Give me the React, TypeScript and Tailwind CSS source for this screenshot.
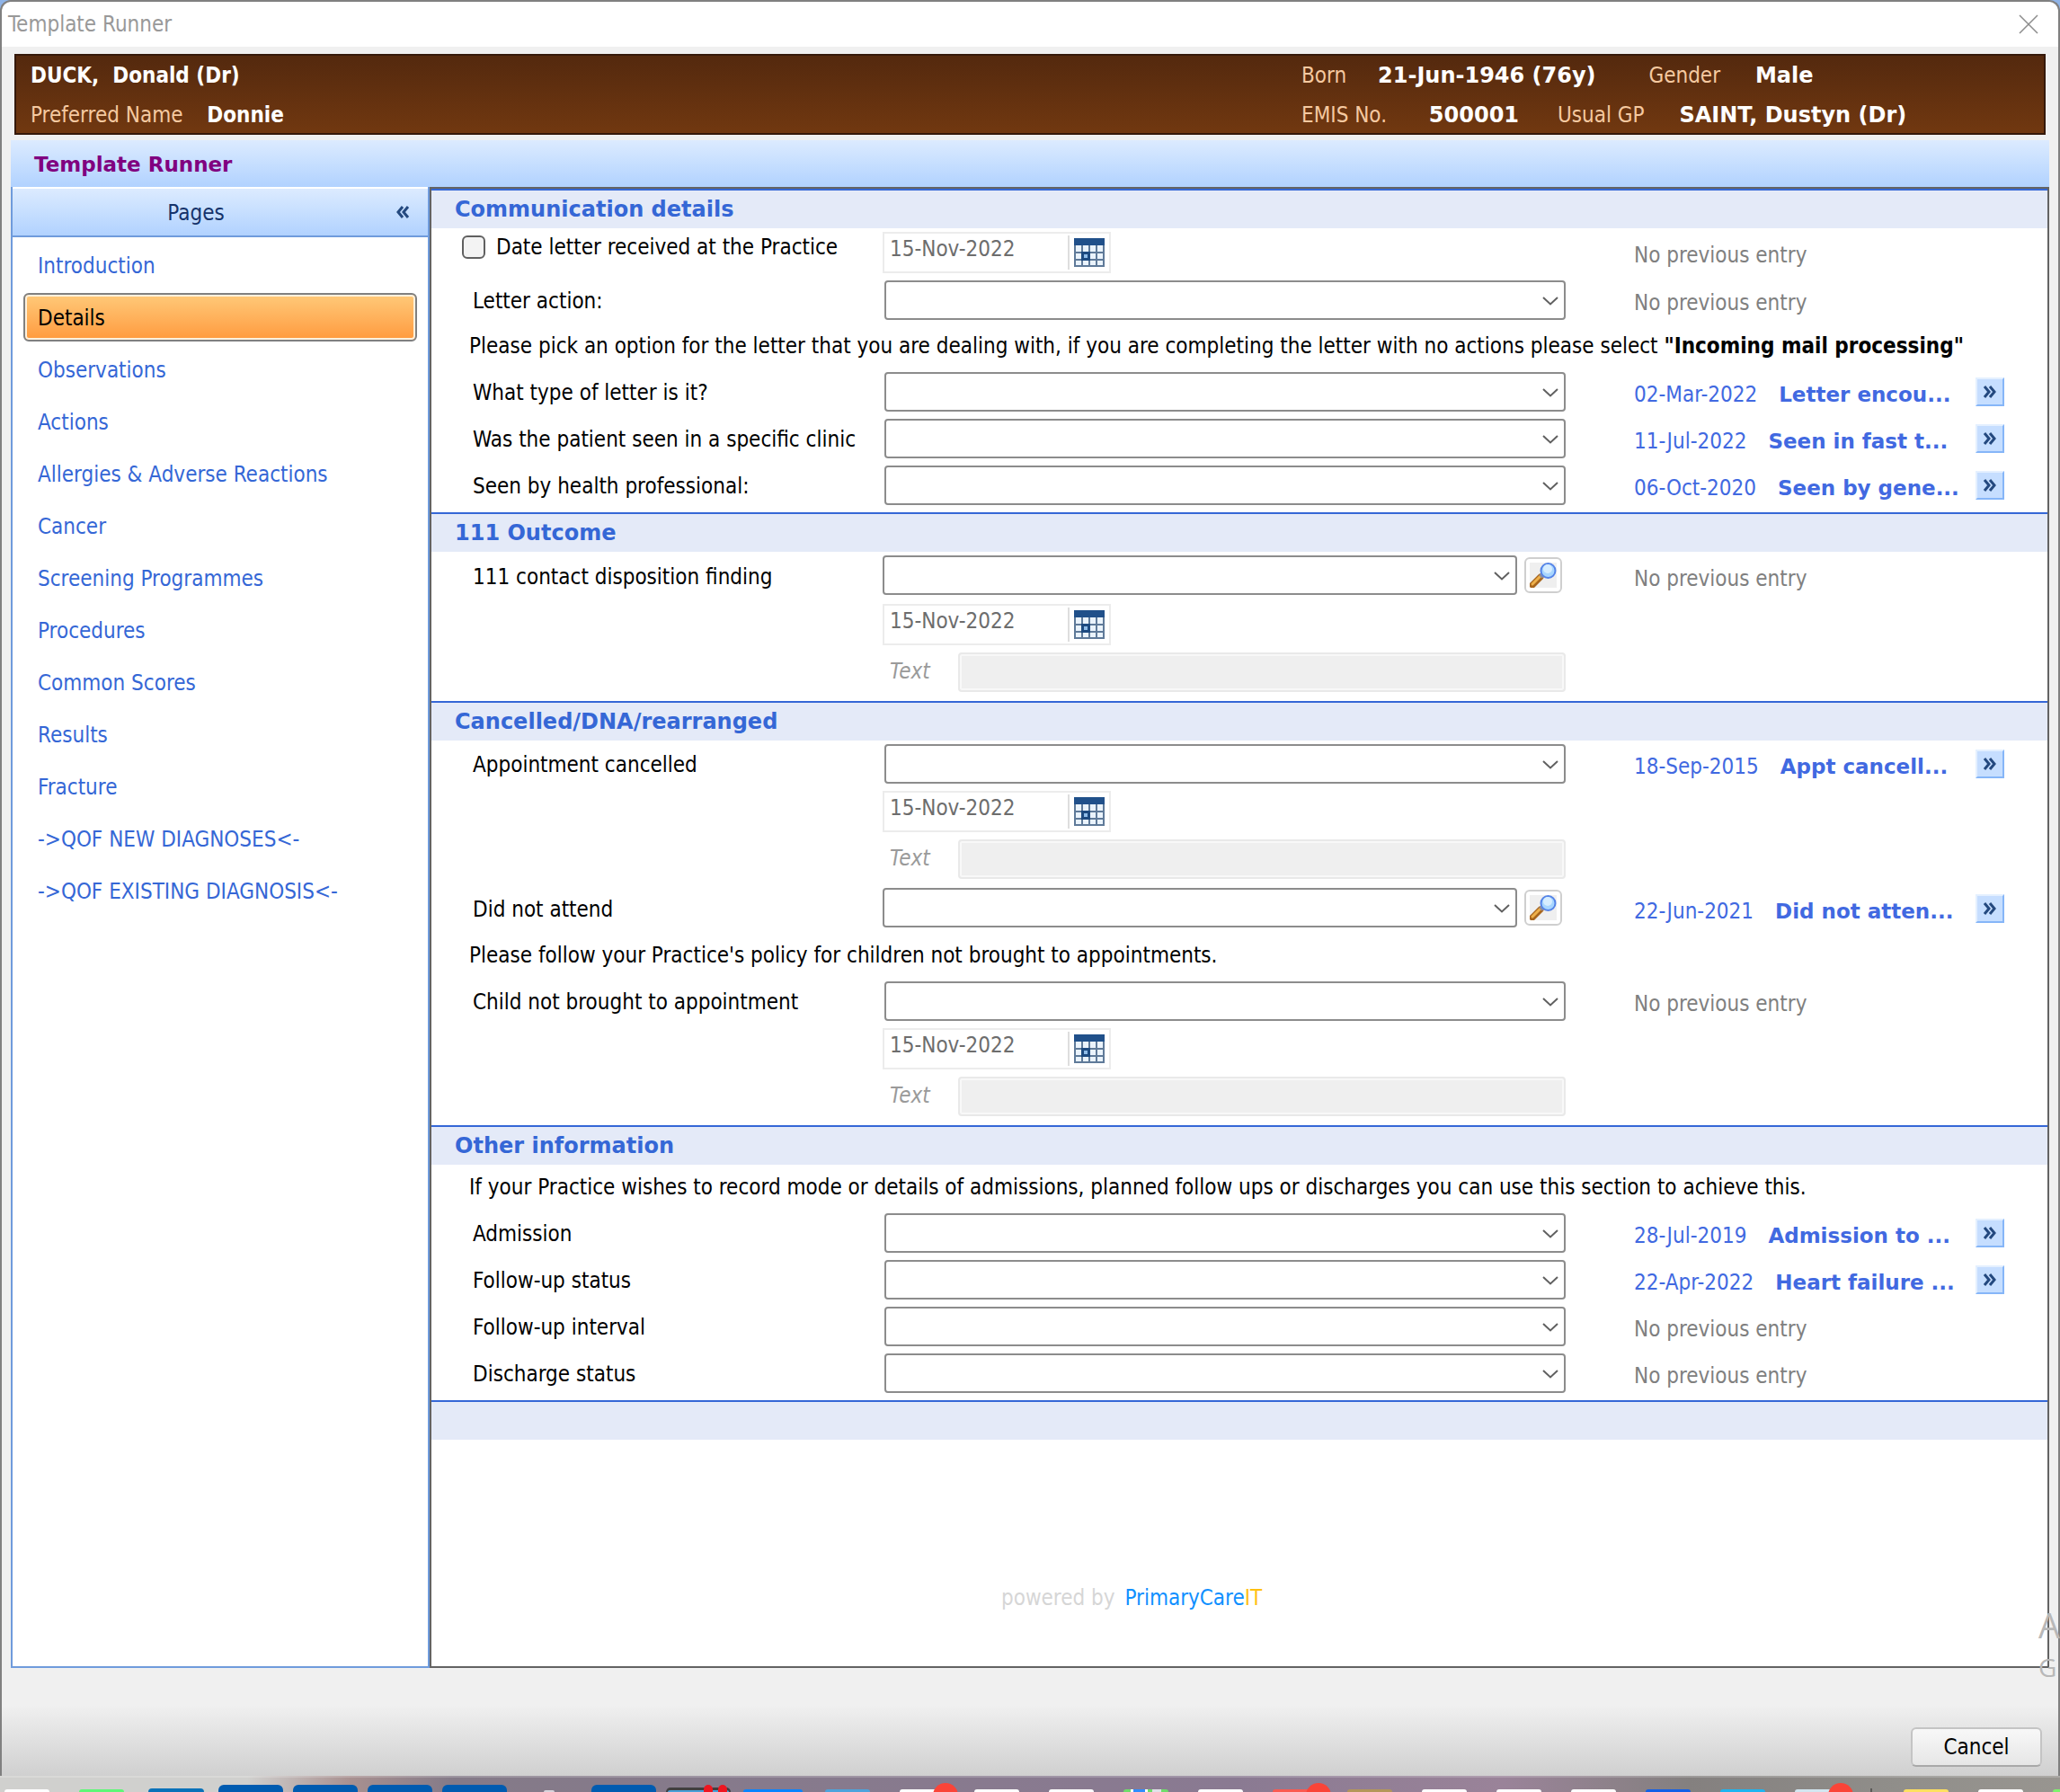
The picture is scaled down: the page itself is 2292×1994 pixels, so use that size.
import { useId, useState } from 'react';
import type { ReactNode } from 'react';
import { clsx } from 'clsx';

const PAGES = [
  'Introduction',
  'Details',
  'Observations',
  'Actions',
  'Allergies & Adverse Reactions',
  'Cancer',
  'Screening Programmes',
  'Procedures',
  'Common Scores',
  'Results',
  'Fracture',
  '->QOF NEW DIAGNOSES<-',
  '->QOF EXISTING DIAGNOSIS<-',
];

type Entry = { date: string; text: string };

function CalendarIcon() {
  return (
    <svg viewBox="0 0 34 32" className="h-8 w-[34px]" aria-hidden="true">
      <rect width="34" height="32" fill="#eaf3fc" />
      <path
        d="M1 8V32M9 8V32M17 8V32M25 8V32M33 8V32M0 16H34M0 24H34M0 31H34"
        stroke="#5f7a99"
        strokeWidth="2"
        fill="none"
      />
      <rect width="34" height="8" fill="#20508a" />
      <rect x="8" y="15" width="10" height="10" fill="#1d4a80" />
      <rect x="11" y="18" width="4" height="4" fill="#8fbce8" />
    </svg>
  );
}

function MagnifierIcon() {
  return (
    <svg viewBox="0 0 30 28" className="h-7 w-[30px]" aria-hidden="true">
      <rect width="30" height="28" fill="#efefef" />
      <path d="M3 25 12 16" stroke="#a8651c" strokeWidth="7" strokeLinecap="round" />
      <path d="M3 24 12 15" stroke="#eeb04a" strokeWidth="3" strokeLinecap="round" />
      <path d="M12 16 15 13" stroke="#8d8d9c" strokeWidth="5" />
      <circle cx="20.500" cy="9" r="8" fill="#a8d6ff" stroke="#5584e8" strokeWidth="2" />
      <circle cx="20" cy="7" r="5" fill="#d6edff" />
    </svg>
  );
}

function DoubleChevron({ left = false }: { left?: boolean }) {
  return (
    <svg viewBox="0 0 16 14" className={clsx('h-3.5 w-4', left && 'rotate-180')} aria-hidden="true">
      <path d="M2 1 7 7 2 13M8 1 13 7 8 13" fill="none" stroke="#24497f" strokeWidth="3" />
    </svg>
  );
}

function SelectBox({ id, search = false }: { id: string; search?: boolean }) {
  return (
    <div className={clsx('flex items-start gap-2', search ? 'h-[46px] pr-1' : 'h-11 pl-0.5')}>
      <div className="grid h-11 flex-1 items-center">
        <select
          id={id}
          className="col-start-1 row-start-1 h-11 w-full appearance-none rounded-sm border-2 border-[#8c8c8c] bg-white px-2"
        >
          <option value=""></option>
        </select>
        <svg
          viewBox="0 0 18 10"
          className="pointer-events-none col-start-1 row-start-1 mt-0.5 mr-2 h-2.5 w-[18px] justify-self-end"
          aria-hidden="true"
        >
          <path d="M1 1 9 8.500 17 1" fill="none" stroke="#606060" strokeWidth="2" />
        </svg>
      </div>
      {search && (
        <button
          type="button"
          aria-label="Search"
          className="mt-0.5 flex h-10 w-[42px] items-center justify-center rounded-md border-2 border-[#cfcfcf] bg-white"
        >
          <MagnifierIcon />
        </button>
      )}
    </div>
  );
}

function DateBox({ label }: { label: string }) {
  return (
    <div className="flex h-[46px] w-[254px] border-2 border-[#ececec] bg-white">
      <input
        type="text"
        aria-label={label}
        defaultValue="15-Nov-2022"
        className="mb-2 w-[204px] min-w-0 px-1.5 text-[#6d6d6d] outline-none"
      />
      <button
        type="button"
        aria-label="Open calendar"
        className="my-0.5 flex flex-1 items-center justify-center border-l-2 border-[#dedede]"
      >
        <CalendarIcon />
      </button>
    </div>
  );
}

function Previous({ entry }: { entry?: Entry }) {
  return (
    <div className="flex h-11 items-center justify-between pr-12 pl-[76px]">
      {entry ? (
        <>
          <a href="#history" className="mt-1.5 flex gap-6 whitespace-nowrap text-[#4169e1]">
            <span>{entry.date}</span>
            <span className="font-['DejaVu_Sans',sans-serif] text-[23px] font-bold">{entry.text}</span>
          </a>
          <button
            type="button"
            aria-label="Show history"
            className="flex h-8 w-8 items-center justify-center border-2 border-t-[#e4f0ff] border-r-[#86b6f8] border-b-[#86b6f8] border-l-[#e4f0ff] bg-[#c6deff]"
          >
            <DoubleChevron />
          </button>
        </>
      ) : (
        <p className="mt-1.5 text-[#808080]">No previous entry</p>
      )}
    </div>
  );
}

function Row({ label, control, children }: { label?: ReactNode; control: ReactNode; children?: ReactNode }) {
  return (
    <div className="grid grid-cols-[502px_minmax(0,1fr)_536px] items-center">
      <div>{label}</div>
      {control}
      {children}
    </div>
  );
}

function PickRow({ label, search, entry }: { label: string; search?: boolean; entry?: Entry }) {
  const id = useId();
  return (
    <Row
      label={
        <label htmlFor={id} className="block pt-0.5 pl-[46px]">
          {label}
        </label>
      }
      control={<SelectBox id={id} search={search} />}
    >
      <Previous entry={entry} />
    </Row>
  );
}

function DateRows({ name }: { name: string }) {
  const id = useId();
  return (
    <>
      <Row control={<DateBox label={`${name} date`} />} />
      <Row
        control={
          <div className="flex h-[46px] items-start">
            <label htmlFor={id} className="h-11 w-[84px] pl-2 leading-[42px] text-[#9a9a9a] italic">
              Text
            </label>
            <input
              id={id}
              type="text"
              disabled
              className="h-11 min-w-0 flex-1 rounded-sm border-2 border-[#e9e9e9] bg-[#efefef] shadow-[inset_0_0_0_2px_#f8f8f8]"
            />
          </div>
        }
      />
    </>
  );
}

function Note({ children }: { children: ReactNode }) {
  return <p className="pl-[42px] leading-[42px] whitespace-nowrap">{children}</p>;
}

function Section({ title, children }: { title: string; children: ReactNode }) {
  return (
    <section>
      <h2 className="h-11 border-t-2 border-[#3567d6] bg-[#e4eaf8] pl-[26px] font-['DejaVu_Sans',sans-serif] leading-[42px] font-bold text-[#3567d6]">
        {title}
      </h2>
      <div className="flex flex-col gap-2 pt-1 pb-2">{children}</div>
    </section>
  );
}

function BannerValue({ className, children }: { className: string; children: ReactNode }) {
  return <b className={clsx("font-['DejaVu_Sans',sans-serif] text-white", className)}>{children}</b>;
}

function PatientBanner() {
  return (
    <header className="mx-1 flex h-[90px] justify-between border-2 border-[#35190a] bg-linear-to-b from-[#54290e] to-[#713810] text-[#f5c9a0]">
      <div className="flex flex-col pl-4 leading-11">
        <p className="font-bold whitespace-pre text-white">DUCK,  Donald (Dr)</p>
        <p>
          Preferred Name <b className="ml-5 text-white">Donnie</b>
        </p>
      </div>
      <div className="flex w-[826px] flex-col leading-11">
        <p>
          Born <BannerValue className="mr-13 ml-7">21-Jun-1946 (76y)</BannerValue> Gender{' '}
          <BannerValue className="ml-8">Male</BannerValue>
        </p>
        <p>
          EMIS No. <BannerValue className="mr-9 ml-10">500001</BannerValue> Usual GP{' '}
          <BannerValue className="ml-8">SAINT, Dustyn (Dr)</BannerValue>
        </p>
      </div>
    </header>
  );
}

function Sidebar() {
  const [active, setActive] = useState('Details');
  return (
    <aside className="flex w-[466px] shrink-0 flex-col border-2 border-t-0 border-[#6f9bdc] bg-white">
      <div className="flex h-14 items-center border-t-2 border-b-2 border-t-white border-b-[#6f9bdc] bg-linear-to-b from-[#dcebff] to-[#b1d2ff] text-[#15336b]">
        <h2 className="flex-1 pt-0.5 pr-[18px] text-center">Pages</h2>
        <button type="button" aria-label="Collapse pages" className="mr-5">
          <DoubleChevron left />
        </button>
      </div>
      <nav className="flex flex-col gap-1 px-3 pt-1">
        {PAGES.map((page) => (
          <a
            key={page}
            href="#page"
            onClick={() => setActive(page)}
            className={clsx(
              'h-[54px] rounded-md border-2 pl-3.5 leading-[52px]',
              page === active
                ? 'border-[#808080] bg-linear-to-b from-[#ffc978] to-[#ff9a3c] text-black shadow-[inset_0_0_0_2px_#fff1dc]'
                : 'border-transparent text-[#3567d6]',
            )}
          >
            {page}
          </a>
        ))}
      </nav>
    </aside>
  );
}

type DockTile = { tile: string; badge?: boolean; remote?: boolean };

const DOCK: DockTile[] = [
  { tile: 'h-[3px] w-[50px] bg-white' },
  { tile: 'h-[3px] w-[50px] bg-[#5ff777]' },
  { tile: 'h-1 w-[62px] bg-[#0a72b9]' },
  { tile: 'h-2 w-[72px] bg-[#005bb0]' },
  { tile: 'h-2 w-[72px] bg-[#005bb0]' },
  { tile: 'h-2 w-[72px] bg-[#005bb0]' },
  { tile: 'h-2 w-[72px] bg-[#005bb0]' },
  { tile: 'h-0.5 w-3 bg-[#d8d4dc]' },
  { tile: 'h-2 w-[72px] bg-[#005bb0]' },
  { tile: 'h-[5px] w-[72px] border-x-2 border-t-[3px] border-[#404040] bg-[#4aa0d8]', remote: true },
  { tile: 'h-[3px] w-[66px] bg-[#0a84ff]' },
  { tile: 'h-[3px] w-[50px] bg-[#4da3dc]' },
  { tile: 'h-[3px] w-[50px] bg-white', badge: true },
  { tile: 'h-[3px] w-[50px] bg-white' },
  { tile: 'h-[3px] w-[50px] bg-white' },
  {
    tile: 'h-[3px] w-[50px] bg-[linear-gradient(to_right,#6fdc6a_0_8px,#fff_8px_11px,#2f8cff_11px_24px,#fff_24px_27px,#6fdc6a_27px_32px,#e0e0e8_32px_42px,#6fdc6a_42px)]',
  },
  { tile: 'h-[3px] w-[50px] bg-white' },
  { tile: 'h-[3px] w-[50px] bg-[#fa5a50]', badge: true },
  { tile: 'h-[3px] w-[50px] bg-[#b4965a]' },
  { tile: 'h-[3px] w-[50px] bg-white' },
  { tile: 'h-[3px] w-[50px] bg-white' },
  { tile: 'h-[3px] w-[50px] bg-white' },
  { tile: 'h-[3px] w-[50px] bg-[#1460e6]' },
  { tile: 'h-[3px] w-[50px] bg-[#1eb4f0]' },
  { tile: 'h-[3px] w-[50px] bg-[#d2e6f0]', badge: true },
];

const DOCK_RIGHT: DockTile[] = [
  { tile: 'h-[3px] w-[50px] bg-[#ffe060]' },
  { tile: 'h-[3px] w-[50px] bg-white' },
  { tile: 'h-[3px] w-[50px] bg-[#7df26c]' },
];

function DockIcon({ tile, badge, remote }: DockTile) {
  return (
    <div className="relative flex w-[83px] shrink-0 justify-center">
      <span className={clsx('rounded-t-md', tile)} />
      {badge && <span className="absolute -bottom-[18px] left-[54px] size-7 rounded-full bg-[#fa4438]" />}
      {remote && (
        <>
          <span className="absolute bottom-0 left-12 h-2 w-2.5 rounded-t-full bg-[#ee1620]" />
          <span className="absolute bottom-0 left-16 h-2 w-2.5 rounded-t-full bg-[#ee1620]" />
        </>
      )}
    </div>
  );
}

function Dock() {
  return (
    <footer className="flex h-[18px] items-end overflow-hidden border-t-2 border-white/20 bg-[linear-gradient(to_right,#d0d0ce_0%,#d0d0ce_12%,#a89090_17%,#847a88_22%,#8a7a92_60%,#9a8399_73%,#84807f_82%,#908e8a_92%,#989590)]">
      <div className="-ml-3 flex shrink-0 items-end">
        {DOCK.map((icon, i) => (
          <DockIcon key={i} {...icon} />
        ))}
      </div>
      <div className="mx-[18px] h-1 w-0.5 shrink-0 bg-[#5c5a58]" />
      {DOCK_RIGHT.map((icon, i) => (
        <DockIcon key={i} {...icon} />
      ))}
    </footer>
  );
}

export default function App() {
  const dateId = useId();
  return (
    <div className="flex min-h-screen flex-col overflow-hidden bg-[#8fb4e8] font-['DejaVu_Sans_Condensed','DejaVu_Sans',sans-serif] text-[24px] leading-8 text-black">
      <div className="relative flex flex-1 flex-col rounded-t-xl border-2 border-b-0 border-[#808080] bg-linear-to-b from-[#f0f0f0] from-96% to-[#d0d0d0]">
        <div className="flex h-[50px] items-center justify-between rounded-t-xl bg-white pr-[22px] pl-[7px] text-[#999999]">
          <h1>Template Runner</h1>
          <button type="button" aria-label="Close">
            <svg viewBox="0 0 22 22" className="size-[22px]" aria-hidden="true">
              <path d="M1 1 21 21M21 1 1 21" stroke="#8c8c8c" strokeWidth="1.500" />
            </svg>
          </button>
        </div>

        <div className="flex flex-1 flex-col px-2.5 pt-2">
          <PatientBanner />
          <div className="mt-1.5 h-[52px] bg-linear-to-b from-[#dcebff] to-[#b1d2ff] pl-[26px] font-['DejaVu_Sans',sans-serif] text-[23px] leading-[54px] font-bold text-[#800080]">
            Template Runner
          </div>

          <div className="flex flex-1">
            <Sidebar />
            <main className="min-w-0 flex-1 border-2 border-[#636363] bg-white">
              <Section title="Communication details">
                <Row
                  label={
                    <label htmlFor={dateId} className="mb-3 flex items-center gap-3 pl-[34px]">
                      <input
                        id={dateId}
                        type="checkbox"
                        className="size-[26px] appearance-none rounded-md border-2 border-[#606060] bg-[#f3f3f3]"
                      />
                      Date letter received at the Practice
                    </label>
                  }
                  control={<DateBox label="Date letter received" />}
                >
                  <Previous />
                </Row>
                <PickRow label="Letter action:" />
                <Note>
                  Please pick an option for the letter that you are dealing with, if you are completing the letter with no
                  actions please select <b>"Incoming mail processing"</b>
                </Note>
                <PickRow label="What type of letter is it?" entry={{ date: '02-Mar-2022', text: 'Letter encou...' }} />
                <PickRow
                  label="Was the patient seen in a specific clinic"
                  entry={{ date: '11-Jul-2022', text: 'Seen in fast t...' }}
                />
                <PickRow label="Seen by health professional:" entry={{ date: '06-Oct-2020', text: 'Seen by gene...' }} />
              </Section>

              <Section title="111 Outcome">
                <PickRow label="111 contact disposition finding" search />
                <DateRows name="111 contact" />
              </Section>

              <Section title="Cancelled/DNA/rearranged">
                <PickRow label="Appointment cancelled" entry={{ date: '18-Sep-2015', text: 'Appt cancell...' }} />
                <DateRows name="Appointment cancelled" />
                <PickRow label="Did not attend" search entry={{ date: '22-Jun-2021', text: 'Did not atten...' }} />
                <Note>Please follow your Practice's policy for children not brought to appointments.</Note>
                <PickRow label="Child not brought to appointment" />
                <DateRows name="Child not brought" />
              </Section>

              <Section title="Other information">
                <Note>
                  If your Practice wishes to record mode or details of admissions, planned follow ups or discharges you can
                  use this section to achieve this.
                </Note>
                <PickRow label="Admission" entry={{ date: '28-Jul-2019', text: 'Admission to ...' }} />
                <PickRow label="Follow-up status" entry={{ date: '22-Apr-2022', text: 'Heart failure ...' }} />
                <PickRow label="Follow-up interval" />
                <PickRow label="Discharge status" />
              </Section>

              <div className="h-11 border-t-2 border-[#3567d6] bg-[#e4eaf8]" />
              <p className="pt-40 pl-[634px] text-[#d6d6d6]">
                powered by <span className="ml-1 text-[#1090ff]">PrimaryCare</span>
                <span className="text-[#ffc010]">IT</span>
              </p>
            </main>
          </div>
        </div>

        <div className="flex h-[120px] items-end justify-end pr-[18px] pb-2.5">
          <button
            type="button"
            className="h-11 w-[146px] rounded-md border-2 border-[#c4c4c4] border-b-[#a8a8a8] bg-linear-to-b from-[#f8f8f8] to-[#e6e6e6] leading-10"
          >
            Cancel
          </button>
        </div>

        {/* Windows activation watermark, mostly off the right edge */}
        <div className="pointer-events-none absolute -right-0.5 bottom-[100px] font-['Open_Sans',sans-serif] text-[#b8b8b8]">
          <p className="text-[38px] leading-[52px]">A</p>
          <p className="text-[28px] leading-[42px]">G</p>
        </div>
      </div>
      <Dock />
    </div>
  );
}
